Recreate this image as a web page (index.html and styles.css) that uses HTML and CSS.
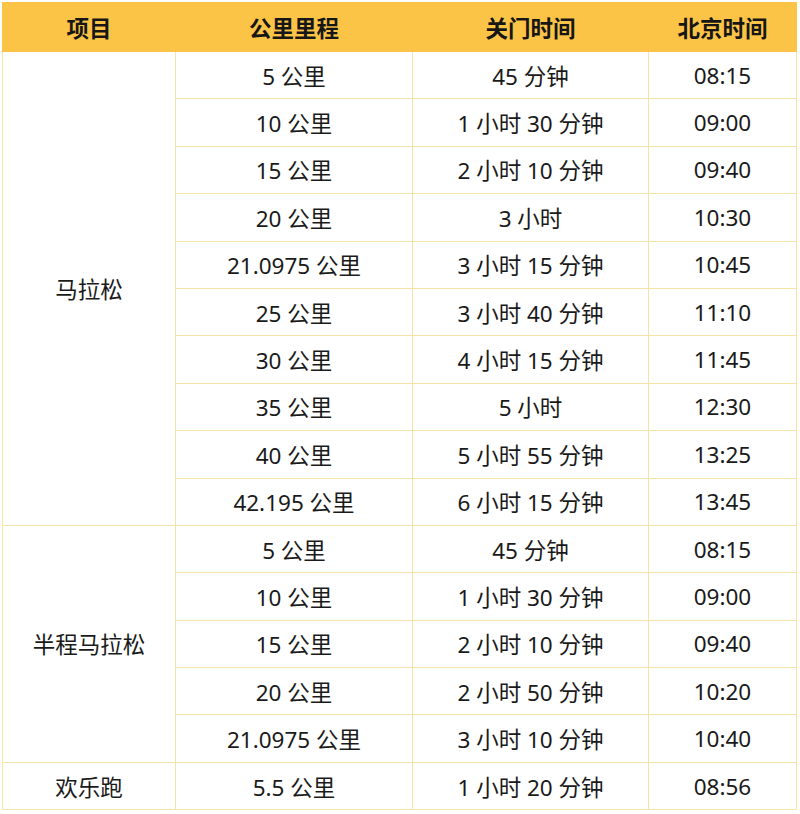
FILE: index.html
```html
<!DOCTYPE html>
<html lang="zh">
<head>
<meta charset="utf-8">
<link rel="stylesheet" href="styles.css">
</head>
<body>
<table class="cutoff">
<colgroup>
<col class="c1"><col class="c2"><col class="c3"><col class="c4">
</colgroup>
<thead>
<tr><th>项目</th><th>公里里程</th><th>关门时间</th><th>北京时间</th></tr>
</thead>
<tbody>
<tr><td rowspan="10">马拉松</td><td>5 公里</td><td>45 分钟</td><td>08:15</td></tr>
<tr><td>10 公里</td><td>1 小时 30 分钟</td><td>09:00</td></tr>
<tr><td>15 公里</td><td>2 小时 10 分钟</td><td>09:40</td></tr>
<tr><td>20 公里</td><td>3 小时</td><td>10:30</td></tr>
<tr><td>21.0975 公里</td><td>3 小时 15 分钟</td><td>10:45</td></tr>
<tr><td>25 公里</td><td>3 小时 40 分钟</td><td>11:10</td></tr>
<tr><td>30 公里</td><td>4 小时 15 分钟</td><td>11:45</td></tr>
<tr><td>35 公里</td><td>5 小时</td><td>12:30</td></tr>
<tr><td>40 公里</td><td>5 小时 55 分钟</td><td>13:25</td></tr>
<tr><td>42.195 公里</td><td>6 小时 15 分钟</td><td>13:45</td></tr>
<tr><td rowspan="5">半程马拉松</td><td>5 公里</td><td>45 分钟</td><td>08:15</td></tr>
<tr><td>10 公里</td><td>1 小时 30 分钟</td><td>09:00</td></tr>
<tr><td>15 公里</td><td>2 小时 10 分钟</td><td>09:40</td></tr>
<tr><td>20 公里</td><td>2 小时 50 分钟</td><td>10:20</td></tr>
<tr><td>21.0975 公里</td><td>3 小时 10 分钟</td><td>10:40</td></tr>
<tr><td>欢乐跑</td><td>5.5 公里</td><td>1 小时 20 分钟</td><td>08:56</td></tr>
</tbody>
</table>
</body>
</html>
```

FILE: styles.css
```css
html, body {
  margin: 0;
  padding: 0;
  background: #ffffff;
}
body {
  padding: 2px 0 0 2px;
  font-family: "Noto Sans", "Noto Sans CJK SC", sans-serif;
  color: #1a1a1a;
}
.cutoff {
  border-collapse: collapse;
  table-layout: fixed;
  width: 794px;
}
.c1 { width: 173px; }
.c2 { width: 237px; }
.c3 { width: 236px; }
.c4 { width: 148px; }
.cutoff th {
  background: #fcc446;
  font-weight: 700;
  font-size: 22.5px;
  height: 48px;
  padding: 0;
  text-align: center;
  vertical-align: middle;
  border: 1px solid #fcc446;
  color: #161616;
}
.cutoff td {
  font-size: 22.5px;
  height: 46.4px;
  padding: 0;
  text-align: center;
  vertical-align: middle;
  border: 1px solid #f6e3a6;
}
```
